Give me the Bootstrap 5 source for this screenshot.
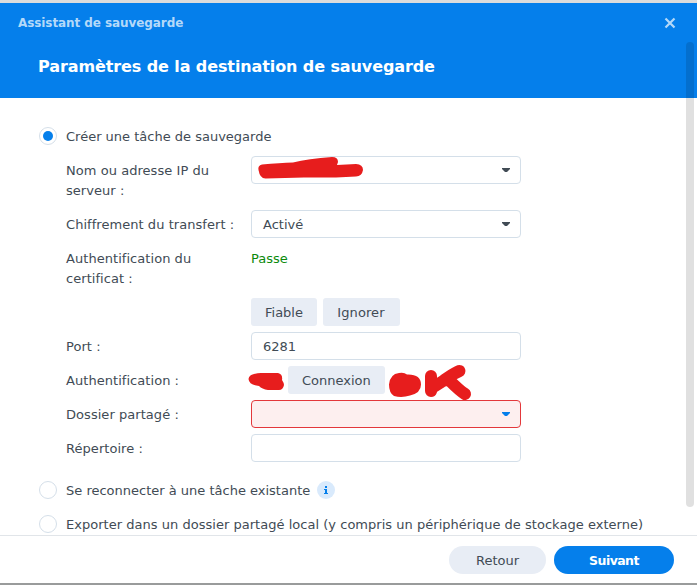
<!DOCTYPE html>
<html lang="fr">
<head>
<meta charset="utf-8">
<meta name="viewport" content="width=device-width, initial-scale=1">
<title>Assistant de sauvegarde</title>
<link href="https://cdn.jsdelivr.net/npm/bootstrap@5.3.0/dist/css/bootstrap.min.css" rel="stylesheet">
<style>
  body { font: 13px/20px Verdana, "DejaVu Sans", sans-serif; color: #414b55; background: #dcdcdc; height: 585px; overflow: hidden; }
  .wizard { height: 580px; margin-top: 3px; }
  .page-shade { height: 2px; background: #999b9b; }
  .wizard-head { height: 95px; background: #057feb; }
  .wizard-name { padding: 10px 20px 0 18px; height: 30px; font-size: 12px; letter-spacing: -.08px; color: #b4d9f9; }
  .wizard-title { margin: 23px 0 0 38px; font-size: 16px; line-height: 22px; letter-spacing: -.1px; }
  .wizard-body { padding: 24px 0 0 39px; }
  .wizard-foot { height: 48px; border-top: 1px solid #e1e5e9; padding: 0 23px 0 0; }
  .choice { height: 28px; gap: 9px; margin-bottom: 6px; }
  .choice-text { padding-top: 2px; }
  .long-text { letter-spacing: .025px; }
  .dot { width: 18px; height: 18px; border: 1px solid #d5dfe9; border-radius: 50%; background: #fff; }
  .dot.on::after { content: ""; width: 10px; height: 10px; border-radius: 50%; background: #057feb; }
  .settings { padding-left: 27px; margin-bottom: 14px; }
  .line { margin-bottom: 6px; min-height: 28px; }
  .line.tall { height: 48px; }
  .caption { width: 185px; padding: 5px 10px 0 0; letter-spacing: .05px; }
  .field { width: 270px; height: 28px; border: 1px solid #d4dfe9; border-radius: 4px; padding: 0 10px 0 11px; }
  .field-text { padding-top: 2px; }
  .field.wrong { background: #fdefef; border-color: #e3383b; color: #057feb; }
  .act { height: 28px; padding: 2px 14px 0; border: 0; border-radius: 3px; background: #e8edf5; color: #414b55; font-size: 13px; line-height: 26px; }
  .act-pair { gap: 6px; }
  .act.skip { width: 77px; padding-left: 13px; letter-spacing: .1px; }
  .login { padding-left: 37px; }
  .pill { border-radius: 14px; }
  .pill.back { width: 97px; }
  .pill.next { width: 120px; background: #057feb; font-size: 12.5px; letter-spacing: -.55px; }
  .passed { color: #0b8a0b; padding-top: 5px; }
  .info-dot { width: 18px; height: 18px; border-radius: 50%; background: #d9eafc; margin-left: -2px; }
  .scroll-thumb { top: 39px; right: 3px; width: 8px; height: 465px; border-radius: 4px; background: rgba(0,0,0,.12); }
  .scribble { left: 0; top: 0; overflow: visible; }
</style>
</head>
<body>
<main class="wizard bg-white position-relative d-flex flex-column">
  <header class="wizard-head flex-shrink-0 d-flex flex-column">
    <div class="wizard-name d-flex justify-content-between fw-bold">
      <span>Assistant de sauvegarde</span>
      <svg width="14" height="20" viewBox="0 0 14 20" aria-label="Fermer"><path d="M2.500 5.500l9 9M11.500 5.500l-9 9" fill="none" stroke="#b4d9f9" stroke-width="2.200"/></svg>
    </div>
    <h1 class="wizard-title fw-bold text-white">Paramètres de la destination de sauvegarde</h1>
  </header>

  <section class="wizard-body flex-grow-1 overflow-hidden">
    <div class="choice d-flex align-items-center"><span class="dot on d-flex align-items-center justify-content-center"></span><span class="choice-text">Créer une tâche de sauvegarde</span></div>
    <div class="settings">
      <div class="line tall d-flex">
        <div class="caption">Nom ou adresse IP du serveur :</div>
        <div class="field d-flex align-items-center justify-content-end position-relative">
          <svg width="8" height="4" viewBox="0 0 8 4"><path d="M0 0h8v1L5 4H3L0 1z" fill="currentColor"/></svg>
          <svg class="scribble position-absolute" width="120" height="26"><path d="M10 7.500Q28 6 41 5.500Q56 1.500 80 0Q86 0 86 5L85 8L104 7Q111 7.500 111 13Q110 19 104 19.500L84 20.500L52 20.500L14 21.500Q8 22 6.500 13Q5.500 8.500 10 7.500z" fill="#e71d1d"/></svg>
        </div>
      </div>
      <div class="line d-flex">
        <div class="caption text-nowrap">Chiffrement du transfert :</div>
        <div class="field d-flex align-items-center justify-content-between"><span class="field-text">Activé</span><svg width="8" height="4" viewBox="0 0 8 4"><path d="M0 0h8v1L5 4H3L0 1z" fill="currentColor"/></svg></div>
      </div>
      <div class="line tall d-flex">
        <div class="caption">Authentification du certificat :</div>
        <div class="passed">Passe</div>
      </div>
      <div class="line d-flex">
        <div class="caption"></div>
        <div class="d-flex act-pair"><button class="act">Fiable</button><button class="act skip">Ignorer</button></div>
      </div>
      <div class="line d-flex">
        <div class="caption">Port :</div>
        <div class="field d-flex align-items-center"><span class="field-text">6281</span></div>
      </div>
      <div class="line d-flex">
        <div class="caption">Authentification :</div>
        <div class="login position-relative">
          <button class="act">Connexion</button>
          <svg class="scribble position-absolute" width="230" height="34"><path d="M3 8Q8 6.500 12 7L27 7Q32 8 31 14Q33 17 33 19Q32 24 28 24L17 24Q11 23 8 20Q-2 19-2.500 13Q-2 9 3 8zM148 7Q153 6 156 8.500Q170 8 170 18.500Q170 27 159 29.500Q151 32 143 30Q138 27 138 18.500Q139 8 148 7z" fill="#e71d1d"/><path d="M180 10L180 25L181 22L192 15C198 11 203 7 208.500 5M192 15L200 13M198 14C204 20 209 25 214 28" fill="none" stroke="#e71d1d" stroke-width="12" stroke-linecap="round" stroke-linejoin="round"/></svg>
        </div>
      </div>
      <div class="line d-flex">
        <div class="caption">Dossier partagé :</div>
        <div class="field wrong d-flex align-items-center justify-content-end"><svg width="8" height="4" viewBox="0 0 8 4"><path d="M0 0h8v1L5 4H3L0 1z" fill="currentColor"/></svg></div>
      </div>
      <div class="line d-flex mb-0">
        <div class="caption">Répertoire :</div>
        <div class="field"></div>
      </div>
    </div>
    <div class="choice d-flex align-items-center"><span class="dot"></span><span class="choice-text">Se reconnecter à une tâche existante</span>
      <svg class="info-dot" viewBox="0 0 18 18"><path d="M8 5h2v2H8zM7 8h3v4h1v1H7v-1h1V9H7z" fill="#057feb"/></svg></div>
    <div class="choice d-flex align-items-center text-nowrap"><span class="dot"></span><span class="choice-text long-text">Exporter dans un dossier partagé local (y compris un périphérique de stockage externe)</span></div>
  </section>

  <footer class="wizard-foot flex-shrink-0 d-flex align-items-center justify-content-end gap-2">
    <button class="act pill back">Retour</button>
    <button class="act pill next text-white fw-bold">Suivant</button>
  </footer>
  <div class="scroll-thumb position-absolute"></div>
</main>
<div class="page-shade"></div>
</body>
</html>
